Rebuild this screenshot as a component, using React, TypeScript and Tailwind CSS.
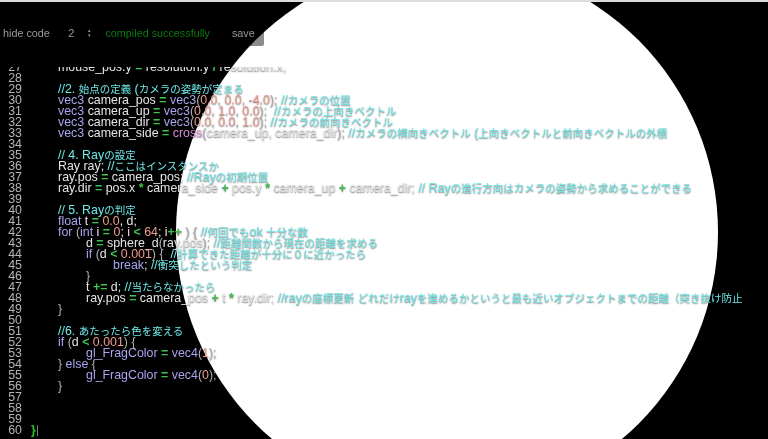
type Kind = 't' | 'c' | 'k' | 'n' | 'o' | 'f' | 'b'
type Token = [Kind, string]

const kindClass: Record<Kind, string> = {
  t: 'text-[#e4e4e4]',
  c: 'text-[#6ee7e7]',
  k: 'text-[#a8a4ee]',
  n: 'text-[#ee9c90]',
  o: 'font-bold text-[#3fc04f]',
  f: 'text-[#d98bd8]',
  b: 'text-[#b0b0b0]',
}

const lines: [number, number, Token[]][] = [
  [27, 0, [['t', 'mouse_pos.y'], ['o', ' = '], ['t', 'resolution.y'], ['o', ' / '], ['t', 'resolution.x;']]],
  [28, 0, []],
  [29, 0, [['c', '//2. 始点の定義 (カメラの姿勢が定まる']]],
  [30, 0, [['k', 'vec3'], ['t', ' camera_pos '], ['o', '='], ['k', ' vec3'], ['b', '('], ['n', '0.0'], ['b', ', '], ['n', '0.0'], ['b', ', '], ['n', '-4.0'], ['b', '); '], ['c', '//カメラの位置']]],
  [31, 0, [['k', 'vec3'], ['t', ' camera_up '], ['o', '='], ['k', ' vec3'], ['b', '('], ['n', '0.0'], ['b', ', '], ['n', '1.0'], ['b', ', '], ['n', '0.0'], ['b', ');  '], ['c', '//カメラの上向きベクトル']]],
  [32, 0, [['k', 'vec3'], ['t', ' camera_dir '], ['o', '='], ['k', ' vec3'], ['b', '('], ['n', '0.0'], ['b', ', '], ['n', '0.0'], ['b', ', '], ['n', '1.0'], ['b', '); '], ['c', '//カメラの前向きベクトル']]],
  [33, 0, [['k', 'vec3'], ['t', ' camera_side '], ['o', '='], ['f', ' cross'], ['b', '('], ['t', 'camera_up, camera_dir'], ['b', '); '], ['c', '//カメラの横向きベクトル (上向きベクトルと前向きベクトルの外積']]],
  [34, 0, []],
  [35, 0, [['c', '// 4. Rayの設定']]],
  [36, 0, [['t', 'Ray ray; '], ['c', '//ここはインスタンスか']]],
  [37, 0, [['t', 'ray.pos '], ['o', '='], ['t', ' camera_pos; '], ['c', '//Rayの初期位置']]],
  [38, 0, [['t', 'ray.dir '], ['o', '='], ['t', ' pos.x '], ['o', '*'], ['t', ' camera_side '], ['o', '+'], ['t', ' pos.y '], ['o', '*'], ['t', ' camera_up '], ['o', '+'], ['t', ' camera_dir; '], ['c', '// Rayの進行方向はカメラの姿勢から求めることができる']]],
  [39, 0, []],
  [40, 0, [['c', '// 5. Rayの判定']]],
  [41, 0, [['k', 'float'], ['t', ' t '], ['o', '='], ['n', ' 0.0'], ['t', ', d;']]],
  [42, 0, [['k', 'for'], ['b', ' ('], ['k', 'int'], ['t', ' i '], ['o', '='], ['n', ' 0'], ['t', '; i '], ['o', '<'], ['n', ' 64'], ['t', '; i'], ['o', '++'], ['b', ' ) { '], ['c', '//何回でもok 十分な数']]],
  [43, 1, [['t', 'd '], ['o', '='], ['t', ' sphere_d'], ['b', '('], ['t', 'ray.pos'], ['b', '); '], ['c', '//距離関数から現在の距離を求める']]],
  [44, 1, [['k', 'if'], ['b', ' ('], ['t', 'd '], ['o', '<'], ['n', ' 0.001'], ['b', ') {  '], ['c', '//計算できた距離が十分に０に近かったら']]],
  [45, 2, [['k', 'break'], ['t', '; '], ['c', '//衝突したという判定']]],
  [46, 1, [['b', '}']]],
  [47, 1, [['t', 't '], ['o', '+='], ['t', ' d; '], ['c', '//当たらなかったら']]],
  [48, 1, [['t', 'ray.pos '], ['o', '='], ['t', ' camera_pos '], ['o', '+'], ['t', ' t '], ['o', '*'], ['t', ' ray.dir; '], ['c', '//rayの座標更新 どれだけrayを進めるかというと最も近いオブジェクトまでの距離（突き抜け防止']]],
  [49, 0, [['b', '}']]],
  [50, 0, []],
  [51, 0, [['c', '//6. あたったら色を変える']]],
  [52, 0, [['k', 'if'], ['b', ' ('], ['t', 'd '], ['o', '<'], ['n', ' 0.001'], ['b', ') {']]],
  [53, 1, [['k', 'gl_FragColor'], ['o', ' = '], ['k', 'vec4'], ['b', '('], ['n', '1'], ['b', ');']]],
  [54, 0, [['b', '} '], ['k', 'else'], ['b', ' {']]],
  [55, 1, [['k', 'gl_FragColor'], ['o', ' = '], ['k', 'vec4'], ['b', '('], ['n', '0'], ['b', ');']]],
  [56, 0, [['b', '}']]],
  [57, 0, []],
  [58, 0, []],
  [59, 0, []],
]

const indentClass = ['pl-[58px]', 'pl-[86px]', 'pl-[113px]']

// the Japanese glyphs in the shot are set smaller than the latin ones
function Comment({ text }: { text: string }) {
  const parts = text.split(/([^\x00-\x7f]+)/)
  return (
    <>
      {parts.map((part, i) =>
        i % 2 === 1 ? (
          <span key={i} className="text-[10.5px]">
            {part}
          </span>
        ) : (
          part
        ),
      )}
    </>
  )
}

function CodeLine({ num, indent, tokens }: { num: number; indent: number; tokens: Token[] }) {
  return (
    <div className="flex h-[11.03px] shrink-0 items-center whitespace-pre">
      <span className="w-[22px] shrink-0 text-right text-[#b4b4b4]">{num}</span>
      <span className={`-ml-[22px] ${indentClass[indent]}`}>
        {tokens.map(([kind, text], i) => (
          <span key={i} className={kindClass[kind]}>
            {kind === 'c' ? <Comment text={text} /> : text}
          </span>
        ))}
      </span>
    </div>
  )
}

export default function App() {
  return (
    <div className="relative h-[439px] w-[768px] overflow-hidden bg-black font-['Liberation_Sans','Noto_Sans_CJK_JP',sans-serif] blur-[0.55px]">
      {/* canvas circle behind the editor */}
      <div className="absolute left-[176px] top-[-39px] h-[542px] w-[542px] rounded-full bg-white" />

      <div className="relative flex h-full flex-col">
        <div className="h-[2px] shrink-0 bg-[#dcdcdc]" />

        <div className="flex h-[64.5px] shrink-0 items-center whitespace-nowrap pb-[2px] text-[10.8px] text-[#9a9a9a]">
          <span className="ml-[3px]">hide code</span>
          <span className="ml-[18.5px] text-[11px]">2</span>
          <span className="ml-[14px] flex flex-col text-[5px] leading-[5px]">
            <span>▴</span>
            <span>▾</span>
          </span>
          <span className="ml-[14px] text-[#0d7a12]">compiled successfully</span>
          <span className="ml-[16px] flex h-[25px] w-[38px] items-center rounded-[2px] bg-black/45 pl-[6px]">save</span>
        </div>

        <div className="flex min-h-0 flex-1 flex-col justify-end overflow-hidden pb-[2.5px] text-[12.4px] leading-[11px] [text-shadow:0_1px_1.5px_rgba(0,0,0,0.6)]">
          {lines.map(([num, indent, tokens]) => (
            <CodeLine key={num} num={num} indent={indent} tokens={tokens} />
          ))}
          <div className="flex h-[11.03px] shrink-0 items-center whitespace-pre">
            <span className="w-[22px] shrink-0 text-right text-[#b4b4b4]">60</span>
            <span className="ml-[9px] font-bold text-[#22d022]">{'}'}</span>
            <span className="ml-[1px] h-[11px] w-[1px] bg-[#777]" />
          </div>
        </div>
      </div>
    </div>
  )
}
